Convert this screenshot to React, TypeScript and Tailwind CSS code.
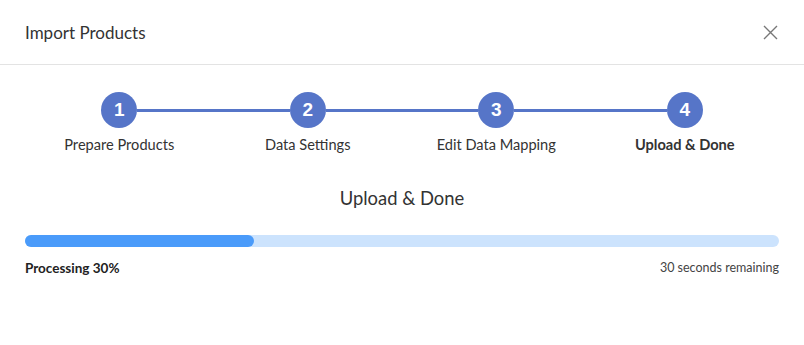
const STEPS = ['Prepare Products', 'Data Settings', 'Edit Data Mapping', 'Upload & Done'];

function StepItem({ index, label, active }: { index: number; label: string; active: boolean }) {
  const first = index === 0;
  const last = index === STEPS.length - 1;
  return (
    <div className="flex flex-col items-center">
      <div className="flex w-full items-center">
        <div className={`h-[3px] flex-1 ${first ? 'bg-transparent' : 'bg-[#5675c8]'}`} />
        <div className="flex h-[36px] w-[36px] flex-none items-center justify-center rounded-full bg-[#5675c8] font-['Liberation_Sans',sans-serif] text-[19px] font-bold text-white">
          {index + 1}
        </div>
        <div className={`h-[3px] flex-1 ${last ? 'bg-transparent' : 'bg-[#5675c8]'}`} />
      </div>
      <span className={`mt-[8px] text-[14.6px] leading-[18px] text-[#333] ${active ? 'font-bold' : ''}`}>
        {label}
      </span>
    </div>
  );
}

export default function App() {
  const progress = 30;
  return (
    <div className="h-[345px] w-[804px] bg-white font-['Lato','Liberation_Sans',sans-serif] text-[#333]">
      {/* header */}
      <div className="flex h-[65px] items-center justify-between border-b border-[#e3e3e3] pl-[25px] pr-[24px]">
        <span className="pt-[2px] text-[17px] text-[#333]">Import Products</span>
        <button className="flex h-[20px] w-[20px] items-center justify-center text-[#777]" title="Close">
          <svg width="15" height="15" viewBox="0 0 15 15" fill="none" stroke="currentColor" strokeWidth="1.4">
            <path d="M1 1 L14 14 M14 1 L1 14" />
          </svg>
        </button>
      </div>

      <div className="px-[25px]">
        {/* stepper */}
        <div className="mt-[27px] grid grid-cols-4">
          {STEPS.map((s, i) => (
            <StepItem key={s} index={i} label={s} active={i === STEPS.length - 1} />
          ))}
        </div>

        <h2 className="mt-[33px] text-center text-[18.4px] leading-[22px] text-[#333]">Upload &amp; Done</h2>

        {/* progress */}
        <div className="mt-[26px] h-[12px] w-full rounded-full bg-[#cce3fd]">
          <div className="h-full rounded-full bg-[#4a9bfa]" style={{ width: `${progress + 0.4}%` }} />
        </div>
        <div className="mt-[13px] flex items-center justify-between leading-[16px]">
          <span className="text-[13.5px] font-bold text-[#222]">Processing {progress}%</span>
          <span className="text-[12.5px] text-[#444]">30 seconds remaining</span>
        </div>
      </div>
    </div>
  );
}
